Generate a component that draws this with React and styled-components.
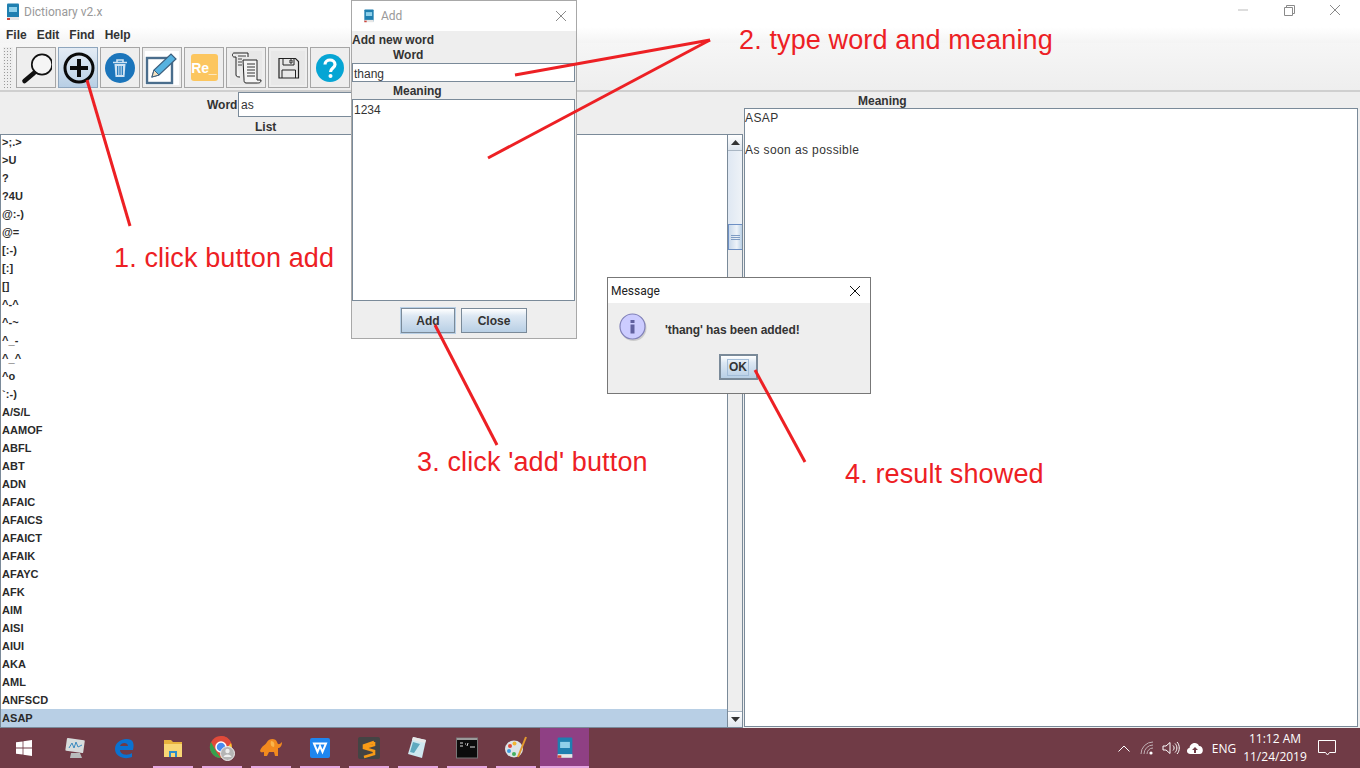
import React from 'react';
import styled, { createGlobalStyle } from 'styled-components';

const Global = createGlobalStyle`
  html, body { margin: 0; padding: 0; width: 1360px; height: 768px; overflow: hidden; background: #eeeeee; }
  * { box-sizing: border-box; }
  #root { width: 1360px; height: 768px; }
`;

const Page = styled.div`
  position: relative; width: 1360px; height: 768px; display: flex; flex-direction: column;
  font-family: "Liberation Sans", Arial, sans-serif; font-size: 12px; color: #333;
  background: #eeeeee; overflow: hidden;
`;
const TitleBar = styled.div`
  height: 27px; background: #fff; display: flex; align-items: center; padding: 0 0 3px 4px; flex: none;
`;
const TitleText = styled.span`
  font-family: Roboto, sans-serif; font-size: 12px; color: ${p => p.$c || '#999'}; margin-left: ${p => p.$ml ?? 2}px; white-space: nowrap;
`;
const WinControls = styled.div`
  margin-left: auto; margin-right: 2px; display: flex; align-self: flex-start;
`;
const WinBtn = styled.div`
  width: 46px; height: 20px; display: flex; align-items: center; justify-content: center;
`;
const MenuBar = styled.div`
  height: 16px; flex: none; display: flex; padding-left: 6px; gap: 10px; align-items: center;
  background: linear-gradient(#fff, #f4f4f4); font-weight: bold; color: #333;
`;
const Toolbar = styled.div`
  height: 49px; flex: none; display: flex; align-items: flex-start; padding: 4px 0 0 3px; gap: 2px;
  background: linear-gradient(#f6f6f6, #eeeeee); border-bottom: 2px solid #cfcfcf;
`;
const Grip = styled.div`
  width: 10px; height: 41px; margin-right: 1px;
  background-color: #eee;
  background-image: radial-gradient(#9a9a9a 0.8px, transparent 1px);
  background-size: 3px 3px;
`;
const ToolBtn = styled.div`
  width: 40px; height: 41px; display: flex; align-items: center; justify-content: center;
  border: 1px solid ${p => p.$active ? '#8fa6bd' : '#a6a6a6'};
  background: ${p => p.$active ? 'linear-gradient(#e4ecf5, #b8cfe5)' : '#eeeeee'};
`;
const Body = styled.div`
  flex: 1; display: flex; min-height: 0;
`;
const LeftPane = styled.div`
  width: 744px; display: flex; flex-direction: column; flex: none; padding-right: 1px;
`;
const WordRow = styled.div`
  height: 25px; flex: none; display: flex; padding-left: 207px; align-items: flex-start;
`;
const FieldLabel = styled.div`
  font-weight: bold; height: 25px; line-height: 27px; width: 31px; white-space: nowrap;
`;
const WordInput = styled.div`
  width: 130px; height: 25px; background: #fff; border: 1px solid #7a8a99; line-height: 25px; padding-left: 2px;
`;
const CenterLabel = styled.div`
  height: ${p => p.$h}px; flex: none; font-weight: bold; line-height: ${p => p.$lh}px; padding-left: ${p => p.$pl}px; white-space: nowrap;
`;
const ListWrap = styled.div`
  flex: 1; display: flex; min-height: 0; border-top: 1px solid #7a8a99; border-bottom: 1px solid #7a8a99; border-left: 1px solid #7a8a99;
`;
const ListBox = styled.div`
  flex: 1; background: #fff; overflow: hidden; min-width: 0;
`;
const ListInner = styled.div`
  margin-top: -2px;
`;
const Row = styled.div`
  height: 18px; line-height: 18px; font-weight: bold; font-size: 11px; letter-spacing: .05px; padding-left: 1px; color: #2a2a2a;
  background: ${p => p.$sel ? '#b8cfe5' : 'transparent'};
`;
const ScrollBar = styled.div`
  width: 16px; flex: none; display: flex; flex-direction: column; background: #eee;
  border-left: 1px solid #7a8a99; border-right: 1px solid #7a8a99;
`;
const ArrowBtn = styled.div`
  height: 16px; flex: none; display: flex; align-items: center; justify-content: center;
  background: linear-gradient(#fff, #dfe6ee);
  border-${p => p.$up ? 'bottom' : 'top'}: 1px solid #a9b6c3;
`;
const TrackTop = styled.div`
  height: 73px; flex: none; background: linear-gradient(90deg, #dfe8f3, #eef2f7);
`;
const Thumb = styled.div`
  height: 26px; flex: none; display: flex; flex-direction: column; align-items: center; justify-content: center; gap: 1px;
  background: linear-gradient(90deg, #c8d8ea, #eef3f9 60%, #b8cfe5); border-top: 1px solid #6d8fc4; border-bottom: 1px solid #6d8fc4;
  border-left: 1px solid #6d8fc4;
  i { display: block; width: 9px; height: 1px; background: #7f9cc4; }
`;
const TrackRest = styled.div`
  flex: 1;
`;
const RightPane = styled.div`
  flex: 1; display: flex; flex-direction: column; padding: 0 2px 1px 0;
`;
const TextPanel = styled.div`
  flex: 1; background: #fff; border: 1px solid #7a8a99; padding-top: 1px; letter-spacing: .4px; line-height: 16px;
`;
const TextLine = styled.div`
  height: 16px; color: #333;
`;
const Taskbar = styled.div`
  height: 40px; flex: none; background: #703b46; display: flex; align-items: stretch; position: relative;
`;
const StartBtn = styled.div`
  width: 50px; padding-right: 2px; display: flex; align-items: center; justify-content: center;
`;
const TaskItem = styled.div`
  width: 49px; position: relative; display: flex; align-items: center; justify-content: center;
  background: ${p => p.$sel ? '#8f4084' : 'transparent'};
  ${p => p.$on && `&::after { content: ''; position: absolute; left: ${p.$sel ? 0 : 5}px; right: ${p.$sel ? 0 : 4}px; bottom: 0; height: 2px; background: #e6a8e2; }`}
`;
const Tray = styled.div`
  margin-left: auto; margin-right: 15px; display: flex; align-items: center; color: #fff; font-family: "Open Sans", sans-serif; font-size: 12px;
`;
const TrayIcon = styled.div`
  width: ${p => p.$w || 23}px; display: flex; justify-content: center;
`;
const Clock = styled.div`
  width: 68px; text-align: center; line-height: 18px; white-space: nowrap;
`;
const Lang = styled.div`
  width: 34px; text-align: center;
`;
const Notify = styled.div`
  width: 36px; display: flex; justify-content: center;
`;

/* floating windows */
const Win = styled.div`
  position: absolute; left: ${p => p.$x}px; top: ${p => p.$y}px; width: ${p => p.$w}px; height: ${p => p.$h}px;
  background: #eee; border: 1px solid ${p => p.$bc}; display: flex; flex-direction: column;
`;
const WinTitle = styled.div`
  height: ${p => p.$h}px; flex: none; background: #fff; display: flex; align-items: center; padding-left: ${p => p.$pl}px;
`;
const WinClose = styled.div`
  margin-left: auto; margin-right: ${p => p.$mr}px; display: flex;
`;
const DlgBody = styled.div`
  flex: 1; display: flex; flex-direction: column; font-weight: bold;
`;
const DlgHead = styled.div`
  height: 15px; line-height: 17px; margin-top: 1px; white-space: nowrap;
`;
const DlgLabel = styled.div`
  height: ${p => p.$h}px; line-height: ${p => p.$lh}px; padding-left: ${p => p.$pl}px; white-space: nowrap;
`;
const DlgInput = styled.div`
  width: 223px; height: ${p => p.$h}px; flex: none; background: #fff; border: 1px solid #7a8a99; font-weight: normal;
  padding-left: 1px; line-height: ${p => p.$lh}px;
`;
const DlgButtons = styled.div`
  display: flex; justify-content: flex-start; gap: 6px; padding: 7px 0 0 49px;
`;
const JButton = styled.div`
  width: ${p => p.$w}px; height: ${p => p.$h || 25}px; display: flex; align-items: center; justify-content: center; font-weight: bold;
  background: linear-gradient(#fff, #dde8f3 30%, #b8cfe5);
  border: ${p => p.$bw || 1}px solid #7a8a99;
  box-shadow: ${p => p.$focus ? '0 0 0 1px #b8cfe5' : 'none'};
`;
const MsgBody = styled.div`
  flex: 1; display: flex; flex-direction: column;
`;
const MsgRow = styled.div`
  display: flex; align-items: flex-start; padding: 10px 0 0 11px; height: 51px; font-weight: bold;
`;
const MsgText = styled.div`
  margin: 10px 0 0 16px; white-space: nowrap; color: #333; letter-spacing: -.08px;
`;
const OkWrap = styled.div`
  display: flex; justify-content: center; padding-right: 2px;
`;
const FocusBox = styled.span`
  border: 1px solid #a3bdd8; padding: 0 1px; line-height: 15px;
`;

/* annotation */
const Overlay = styled.svg`
  position: absolute; left: 0; top: 0; width: 1360px; height: 768px; pointer-events: none;
`;
const Note = styled.div`
  position: absolute; left: ${p => p.$x}px; top: ${p => p.$y}px; font-size: 27px; line-height: 32px; color: #ed2024; white-space: nowrap; letter-spacing: .13px;
`;

const BookIcon = ({ s = 16 }) => (
  <svg width={s} height={s} viewBox="0 0 16 18">
    <rect x="2" y="0.5" width="12" height="16" rx="1" fill="#1f7fb0" />
    <rect x="4" y="4" width="8" height="5" fill="#8fd0ea" />
    <rect x="2" y="14" width="12" height="3" fill="#e6e6e6" />
    <rect x="2" y="15" width="3" height="2" fill="#d0453c" />
  </svg>
);
const CloseX = ({ c = '#8a8a8a', s = 12 }) => (
  <svg width={s} height={s} viewBox="0 0 12 12"><path d="M1 1 L11 11 M11 1 L1 11" stroke={c} strokeWidth="1" fill="none" /></svg>
);

const SearchI = () => (
  <svg width="32" height="36" viewBox="0 0 32 36">
    <circle cx="22" cy="14.5" r="10.2" fill="#fff" fillOpacity=".4" stroke="#111" strokeWidth="1.7" />
    <path d="M14 23 L4.5 31" stroke="#111" strokeWidth="4.6" strokeLinecap="round" />
  </svg>
);
const PlusI = () => (
  <svg width="36" height="36" viewBox="0 0 36 36">
    <circle cx="19" cy="18" r="14" fill="none" stroke="#0a0a0a" strokeWidth="3" />
    <path d="M19 9 V27 M10 18 H28" stroke="#0a0a0a" strokeWidth="4" />
  </svg>
);
const TrashI = () => (
  <svg width="32" height="32" viewBox="0 0 32 32">
    <circle cx="16" cy="16" r="15" fill="#1b75bb" />
    <path d="M9 10.5 H23 M13 10 V8 H19 V10" stroke="#cfe3f3" strokeWidth="1.6" fill="none" />
    <path d="M10.5 12 H21.5 L20.5 25 H11.5 Z" fill="#cfe3f3" />
    <path d="M13.7 14 V23 M16 14 V23 M18.3 14 V23" stroke="#1b75bb" strokeWidth="1.2" />
  </svg>
);
const EditI = () => (
  <svg width="34" height="34" viewBox="0 0 34 34">
    <rect width="34" height="34" fill="#fff" />
    <rect x="2" y="7" width="25" height="25" fill="#fff" stroke="#4a6d8c" strokeWidth="2.4" />
    <path d="M7 26 L9 19 L26 3 L31 8 L14 24 Z" fill="#56b2e0" stroke="#3d5f7d" strokeWidth="1.2" />
    <path d="M7 26 L9 19 L14 24 Z" fill="#f5e2c0" stroke="#3d5f7d" strokeWidth="1" />
  </svg>
);
const ReI = styled.div`
  width: 27px; height: 27px; background: #fcc65f; border-radius: 3px; color: #fff; font: bold 14px "Liberation Sans", sans-serif;
  display: flex; align-items: center; justify-content: center; letter-spacing: 0;
`;
const ScrollI = () => (
  <svg width="32" height="34" viewBox="0 0 32 34">
    <rect width="32" height="34" fill="#e8e8e8" />
    <path d="M4 2 H18 V6 M4 2 C2 2 2 6 4 6 H6 V24 C6 26 9 26 10 26" fill="#f4f4f4" stroke="#222" strokeWidth="1" />
    <path d="M8 5 H16 M8 8 H12 M8 11 H12 M8 14 H12" stroke="#444" strokeWidth="1" />
    <path d="M13 9 H27 V29 H31 C31 32 29 32 27 32 H16 C14 32 14 30 14 28 Z" fill="#f4f4f4" stroke="#222" strokeWidth="1" />
    <path d="M17 13 H25 M17 16 H25 M17 19 H25 M17 22 H25 M17 25 H25" stroke="#333" strokeWidth="1" />
  </svg>
);
const SaveI = () => (
  <svg width="34" height="34" viewBox="0 0 34 34">
    <rect width="34" height="34" fill="#e8e8e8" />
    <path d="M8 7.5 H24.5 L27.5 10.5 V27 H8 Z" fill="none" stroke="#222" strokeWidth="1.2" />
    <path d="M12 7.5 V14 H23 V7.5 M19 9 H21 V12 H19 Z M11 27 V19 H24.5 V27" fill="none" stroke="#222" strokeWidth="1" />
  </svg>
);
const HelpI = () => (
  <svg width="30" height="30" viewBox="0 0 30 30">
    <circle cx="15" cy="15" r="14" fill="#06a5d4" />
    <path d="M10 11.5 C10 5.5 20 5.5 20 11.5 C20 15 15.5 15 15.5 19" fill="none" stroke="#fff" strokeWidth="3.2" />
    <circle cx="15.5" cy="23" r="2" fill="#fff" />
  </svg>
);

const Tri = ({ up }) => (
  <svg width="9" height="5" viewBox="0 0 9 5"><path d={up ? 'M0 5 L4.5 0 L9 5 Z' : 'M0 0 L9 0 L4.5 5 Z'} fill="#333" /></svg>
);

const InfoI = () => (
  <svg width="30" height="30" viewBox="0 0 30 30">
    <circle cx="14.5" cy="15" r="13" fill="#a9a9a9" opacity=".5" />
    <circle cx="13.5" cy="13.5" r="12.5" fill="#ccccff" stroke="#8080b8" strokeWidth="1.2" />
    <rect x="11.5" y="7" width="4" height="3" fill="#6060a0" />
    <rect x="11.5" y="11.5" width="4" height="9" fill="#6060a0" />
  </svg>
);

const items = ['>;.>','>U','?','?4U','@:-)','@=','[:-)','[:]','[]','^-^','^-~','^_-','^_^','^o','`:-)','A/S/L','AAMOF','ABFL','ABT','ADN','AFAIC','AFAICS','AFAICT','AFAIK','AFAYC','AFK','AIM','AISI','AIUI','AKA','AML','ANFSCD','ASAP'];

const icons = [
  <svg width="24" height="24" viewBox="0 0 24 24"><rect x="3" y="3" width="18" height="13" rx="1" fill="#d8dcdc" transform="rotate(8 12 10)" /><path d="M6 12 L9 7 L11 12 L13 6 L15 11 L19 9" stroke="#3a8ac0" fill="none" /><path d="M8 17 H17 L19 22 H7 Z" fill="#b8bcbc" /></svg>,
  <svg width="24" height="24" viewBox="0 0 24 24"><path d="M21 14 H8 C8 19 16 20 20 17 V21 C13 24 3 21 3 13 C3 5 13 1 19 4 C22 6 22 10 21 14 Z M8 10 H16 C16 6 9 6 8 10 Z" fill="#0b72d0" /></svg>,
  <svg width="24" height="24" viewBox="0 0 24 24"><path d="M3 4 H10 L12 6 H21 V9 H3 Z" fill="#e8b33e" /><rect x="3" y="8" width="18" height="13" fill="#f8d775" /><rect x="8" y="15" width="8" height="6" fill="#2d8ecb" /><rect x="10" y="17" width="4" height="4" fill="#f8d775" /></svg>,
  <svg width="26" height="26" viewBox="0 0 26 26"><circle cx="12" cy="12" r="11" fill="#e04a3a" /><path d="M12 1 A11 11 0 0 1 22 8 H12 Z" fill="#e04a3a" /><path d="M2 7 L8 18 L12 23 A11 11 0 0 1 2 7 Z" fill="#35a04e" /><path d="M22 8 A11 11 0 0 1 12 23 L17 14 Z" fill="#f7c52d" /><circle cx="12" cy="12" r="5" fill="#4a8cf0" stroke="#fff" strokeWidth="1.5" /><circle cx="18.5" cy="18.5" r="7" fill="#b5b5b5" stroke="#eee" /><circle cx="18.5" cy="16" r="2.2" fill="#eee" /><path d="M14.5 22 C15 18.5 22 18.5 22.5 22 Z" fill="#eee" /></svg>,
  <svg width="24" height="22" viewBox="0 0 24 22"><path d="M1 14 C3 8 6 9 8 5 C10 1 17 1 18 5 C19 8 20 8 23 5 C23 9 21 11 19 11 L19 19 H16 L15 15 H10 L8 19 H5 L5 15 C3 15 2 16 1 14 Z" fill="#f28a1e" /><path d="M12 4 C15 4 16 7 15 10 C12 10 11 7 12 4 Z" fill="#f9b54c" /></svg>,
  <svg width="22" height="24" viewBox="0 0 22 24"><rect x="1" y="2" width="20" height="20" rx="2" fill="#1f86f0" /><path d="M5 7.5 L8.5 16 L11 10 L13.5 16 L17 7.5 Z" fill="none" stroke="#fff" strokeWidth="2" /></svg>,
  <svg width="24" height="24" viewBox="0 0 24 24"><rect x="1" y="1" width="22" height="22" rx="2" fill="#444" /><path d="M17 6 L7 9.5 V12 L17 15 V18 L7 21 M7 12 L17 9 V6" fill="none" stroke="#f89b16" strokeWidth="2.6" /></svg>,
  <svg width="24" height="24" viewBox="0 0 24 24"><path d="M7 1 L20 4 L16 22 L2 18 Z" fill="#cfe8f0" /><path d="M7 1 L20 4 L19 7 L6 4 Z" fill="#e8e8e8" /><path d="M7 6 L14 8 L8 17 L4 16 Z" fill="#5fa9bf" /></svg>,
  <svg width="22" height="22" viewBox="0 0 22 22"><rect x="0.5" y="1" width="21" height="20" fill="#0c0c0c" stroke="#777" /><rect x="1" y="1" width="20" height="2" fill="#9a9a9a" /><path d="M4 6 H7 M4 9 H7 M9 7 H10 M12 6 L11 9 M14 10 H19" stroke="#ddd" strokeWidth="1" /></svg>,
  <svg width="24" height="26" viewBox="0 0 24 26"><ellipse cx="10" cy="14" rx="9" ry="8.5" fill="#dce4e8" /><circle cx="6" cy="11" r="2" fill="#e04a3a" /><circle cx="10.5" cy="8.5" r="2" fill="#f2b632" /><circle cx="5" cy="16" r="2" fill="#3f9be0" /><circle cx="10" cy="19" r="2" fill="#44b060" /><path d="M22 2 L14 22" stroke="#e39a2d" strokeWidth="2" /></svg>,
];

const lines = [
  'M87 80 L130 226',
  'M515 75 L710 40',
  'M488 158 L710 40',
  'M435 325 L497 445',
  'M755 370 L805 462',
];

export default function App() {
  return (
    <Page>
      <Global />
      <TitleBar>
        <BookIcon s={18} />
        <TitleText>Dictionary v2.x</TitleText>
        <WinControls>
          <WinBtn><svg width="10" height="10" viewBox="0 0 10 10"><path d="M0 5 H10" stroke="#bbb" /></svg></WinBtn>
          <WinBtn><svg width="11" height="11" viewBox="0 0 11 11"><path d="M2.5 2.5 V.5 H10.5 V8.5 H8.5 M.5 2.5 H8.5 V10.5 H.5 Z" fill="none" stroke="#8a8a8a" /></svg></WinBtn>
          <WinBtn><CloseX /></WinBtn>
        </WinControls>
      </TitleBar>
      <MenuBar>
        <span>File</span><span>Edit</span><span>Find</span><span>Help</span>
      </MenuBar>
      <Toolbar>
        <Grip />
        <ToolBtn><SearchI /></ToolBtn>
        <ToolBtn $active><PlusI /></ToolBtn>
        <ToolBtn><TrashI /></ToolBtn>
        <ToolBtn><EditI /></ToolBtn>
        <ToolBtn><ReI>Re_</ReI></ToolBtn>
        <ToolBtn><ScrollI /></ToolBtn>
        <ToolBtn><SaveI /></ToolBtn>
        <ToolBtn><HelpI /></ToolBtn>
      </Toolbar>
      <Body>
        <LeftPane>
          <WordRow>
            <FieldLabel>Word</FieldLabel>
            <WordInput>as</WordInput>
          </WordRow>
          <CenterLabel $pl={255} $h={17} $lh={20}>List</CenterLabel>
          <ListWrap>
            <ListBox>
              <ListInner>
                {items.map(t => <Row key={t} $sel={t === 'ASAP'}>{t}</Row>)}
              </ListInner>
            </ListBox>
            <ScrollBar>
              <ArrowBtn $up><Tri up /></ArrowBtn>
              <TrackTop />
              <Thumb><i /><i /><i /></Thumb>
              <TrackRest />
              <ArrowBtn><Tri /></ArrowBtn>
            </ScrollBar>
          </ListWrap>
        </LeftPane>
        <RightPane>
          <CenterLabel $pl={114} $h={16} $lh={18}>Meaning</CenterLabel>
          <TextPanel>
            <TextLine>ASAP</TextLine>
            <TextLine />
            <TextLine>As soon as possible</TextLine>
          </TextPanel>
        </RightPane>
      </Body>
      <Taskbar>
        <StartBtn>
          <svg width="16" height="16" viewBox="0 0 16 16"><path d="M0 2.3 L6.6 1.4 V7.5 H0 Z M7.4 1.3 L16 0 V7.5 H7.4 Z M0 8.4 H6.6 V14.6 L0 13.7 Z M7.4 8.4 H16 V16 L7.4 14.8 Z" fill="#fff" /></svg>
        </StartBtn>
        {icons.map((ic, i) => <TaskItem key={i} $on={i >= 2}>{ic}</TaskItem>)}
        <TaskItem $on $sel><BookIcon s={22} /></TaskItem>
        <Tray>
          <TrayIcon $w={24}><svg width="12" height="7" viewBox="0 0 12 7"><path d="M.5 6.5 L6 1 L11.5 6.5" fill="none" stroke="#fff" /></svg></TrayIcon>
          <TrayIcon><svg width="16" height="14" viewBox="0 0 16 14"><path d="M1 13 A12 12 0 0 1 13 1 M4 13 A9 9 0 0 1 13 4 M7 13 A6 6 0 0 1 13 7" fill="none" stroke="#c0b0b4" /><circle cx="11" cy="12" r="1.6" fill="#fff" /></svg></TrayIcon>
          <TrayIcon><svg width="18" height="14" viewBox="0 0 18 14"><path d="M1 5 H4 L8 1.5 V12.5 L4 9 H1 Z M11 4.5 C12.5 6 12.5 8 11 9.5 M13 2.5 C15.5 5 15.5 9 13 11.5 M15 1 C18 4 18 10 15 13" fill="none" stroke="#fff" /></svg></TrayIcon>
          <TrayIcon $w={25}><svg width="18" height="12" viewBox="0 0 18 12"><path d="M4.5 12 C0 12 0 6.5 3.5 6 C4 1 11 -1 13 4 C18 4 18 12 13.5 12 Z" fill="#fff" /><path d="M9 5 L6 8 H8 V11 H10 V8 H12 Z" fill="#703b46" /></svg></TrayIcon>
          <Lang>ENG</Lang>
          <Clock>11:12 AM<br />11/24/2019</Clock>
          <Notify><svg width="18" height="16" viewBox="0 0 18 16"><path d="M.5 .5 H17.5 V12.5 H11.5 L9.5 15 L7.5 12.5 H.5 Z" fill="none" stroke="#fff" /></svg></Notify>
        </Tray>
      </Taskbar>

      <Win $x={351} $y={0} $w={226} $h={339} $bc="#a8a8a8">
        <WinTitle $h={30} $pl={10}>
          <BookIcon s={14} />
          <TitleText $ml={5}>Add</TitleText>
          <WinClose $mr={9}><CloseX /></WinClose>
        </WinTitle>
        <DlgBody>
          <DlgHead>Add new word</DlgHead>
          <DlgLabel $h={16} $lh={16} $pl={41}>Word</DlgLabel>
          <DlgInput $h={19} $lh={20}>thang</DlgInput>
          <DlgLabel $h={17} $lh={19} $pl={41}>Meaning</DlgLabel>
          <DlgInput $h={202} $lh={20}>1234</DlgInput>
          <DlgButtons>
            <JButton $w={54} $focus>Add</JButton>
            <JButton $w={66}>Close</JButton>
          </DlgButtons>
        </DlgBody>
      </Win>

      <Win $x={607} $y={277} $w={264} $h={117} $bc="#777777">
        <WinTitle $h={25} $pl={3}>
          <TitleText $c="#222" $ml={0}>Message</TitleText>
          <WinClose $mr={9}><CloseX c="#111" /></WinClose>
        </WinTitle>
        <MsgBody>
          <MsgRow>
            <InfoI />
            <MsgText>'thang' has been added!</MsgText>
          </MsgRow>
          <OkWrap>
            <JButton $w={39} $h={26} $bw={2}><FocusBox>OK</FocusBox></JButton>
          </OkWrap>
        </MsgBody>
      </Win>

      <Overlay viewBox="0 0 1360 768">
        {lines.map(d => <path key={d} d={d} stroke="#ed2024" strokeWidth="3" fill="none" />)}
      </Overlay>
      <Note $x={114} $y={242}>1. click button add</Note>
      <Note $x={739} $y={24}>2. type word and meaning</Note>
      <Note $x={417} $y={446}>3. click 'add' button</Note>
      <Note $x={845} $y={458}>4. result showed</Note>
    </Page>
  );
}
